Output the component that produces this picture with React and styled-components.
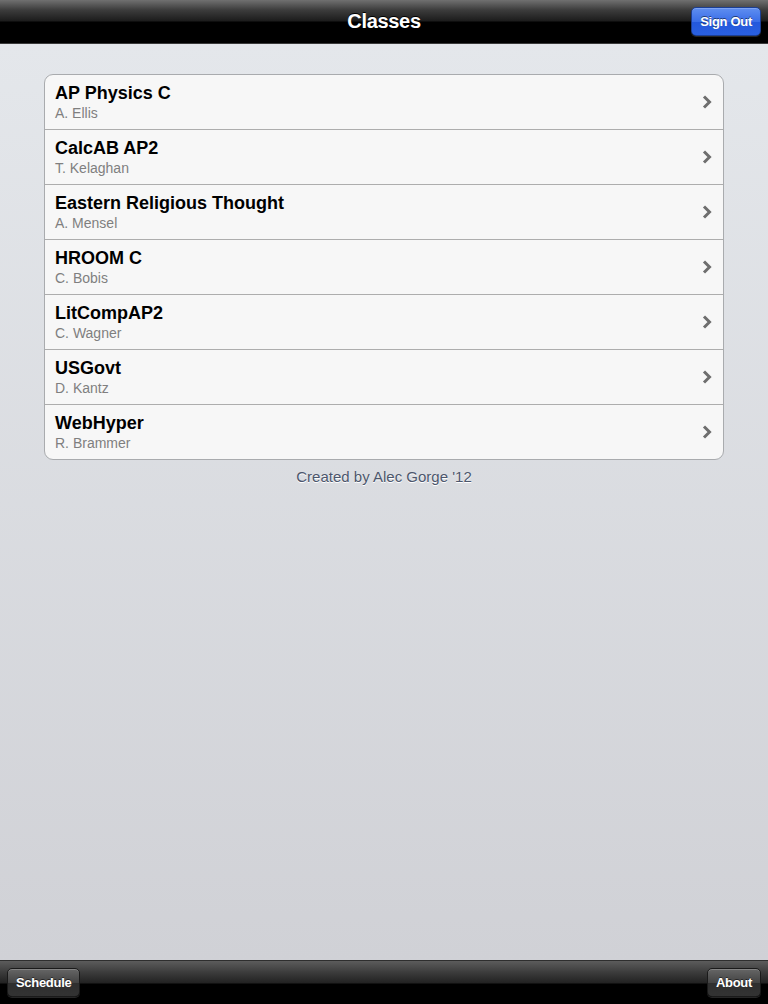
import React from 'react'
import styled, { createGlobalStyle } from 'styled-components'

const classes = [
  { name: 'AP Physics C', teacher: 'A. Ellis' },
  { name: 'CalcAB AP2', teacher: 'T. Kelaghan' },
  { name: 'Eastern Religious Thought', teacher: 'A. Mensel' },
  { name: 'HROOM C', teacher: 'C. Bobis' },
  { name: 'LitCompAP2', teacher: 'C. Wagner' },
  { name: 'USGovt', teacher: 'D. Kantz' },
  { name: 'WebHyper', teacher: 'R. Brammer' },
]

export default function App () {
  return (
    <StyledScreen>
      <GlobalStyle />
      <StyledNavBar>
        <h1>Classes</h1>
        <StyledBarButton $blue>Sign Out</StyledBarButton>
      </StyledNavBar>
      <StyledContent>
        <StyledTable>
          {classes.map((c) => (
            <StyledRow key={c.name}>
              <div className="text">
                <h2>{c.name}</h2>
                <p>{c.teacher}</p>
              </div>
              <svg width="10" height="14" viewBox="0 0 10 14">
                <path d="M2 1.5 L7.5 7 L2 12.5" fill="none" stroke="#6e6e6e" strokeWidth="3" />
              </svg>
            </StyledRow>
          ))}
        </StyledTable>
        <StyledFooter>Created by Alec Gorge '12</StyledFooter>
      </StyledContent>
      <StyledToolbar>
        <StyledBarButton>Schedule</StyledBarButton>
        <StyledBarButton>About</StyledBarButton>
      </StyledToolbar>
    </StyledScreen>
  )
}

const GlobalStyle = createGlobalStyle`
  html, body {
    margin: 0;
    padding: 0;
  }
  body {
    font-family: "Liberation Sans", Arial, sans-serif;
  }
`

const StyledScreen = styled.div`
  width: 768px;
  height: 1004px;
  display: flex;
  flex-direction: column;
  overflow: hidden;
`

const StyledNavBar = styled.div`
  height: 43px;
  flex-shrink: 0;
  display: flex;
  align-items: center;
  justify-content: flex-end;
  padding: 0 7px;
  position: relative;
  background: linear-gradient(#707070 0px, #3c3c3c 10px, #1c1c1c 21px, #000 22px, #000 100%);
  border-bottom: 1px solid #3a3a3a;
  h1 {
    position: absolute;
    left: 0;
    right: 0;
    margin: 0;
    text-align: center;
    color: #fff;
    font-size: 20px;
    font-weight: bold;
    letter-spacing: -0.3px;
    text-shadow: 0 -1px 0 #000;
    pointer-events: none;
  }
`

const StyledBarButton = styled.div`
  position: relative;
  height: 27px;
  padding: 0 8px;
  display: flex;
  align-items: center;
  border-radius: 5px;
  color: #fff;
  font-size: 13px;
  font-weight: bold;
  letter-spacing: -0.3px;
  text-shadow: 0 -1px 0 rgba(0, 0, 0, 0.5);
  border: 1px solid ${(p) => (p.$blue ? '#1c3f94' : '#1a1a1a')};
  background: ${(p) =>
    p.$blue
      ? 'linear-gradient(#5f8ef0 0%, #3a6ee8 50%, #2358dc 51%, #2a60e0 100%)'
      : 'linear-gradient(#666 0%, #444 50%, #2e2e2e 51%, #333 100%)'};
  box-shadow: 0 1px 0 rgba(255, 255, 255, 0.15), inset 0 1px 0 rgba(255, 255, 255, 0.2);
`

const StyledContent = styled.div`
  flex: 1;
  background: linear-gradient(#e4e7eb, #d0d1d6);
  padding: 30px 44px 0 44px;
  display: flex;
  flex-direction: column;
`

const StyledTable = styled.div`
  background: #f7f7f7;
  border: 1px solid #a9abae;
  border-radius: 9px;
  overflow: hidden;
`

const StyledRow = styled.div`
  height: 54px;
  display: flex;
  align-items: center;
  justify-content: space-between;
  padding: 0 10px 0 10px;
  border-bottom: 1px solid #adadad;
  &:last-child {
    border-bottom: none;
  }
  .text {
    display: flex;
    flex-direction: column;
  }
  h2 {
    margin: 0;
    font-size: 18px;
    font-weight: bold;
    color: #000;
    line-height: 21px;
  }
  p {
    margin: 0;
    font-size: 14px;
    color: #7f7f7f;
    line-height: 18px;
  }
  svg {
    margin-right: 1px;
  }
`

const StyledFooter = styled.div`
  text-align: center;
  color: #4c566c;
  font-size: 15px;
  margin-top: 8px;
  text-shadow: 0 1px 0 #fff;
`

const StyledToolbar = styled.div`
  height: 43px;
  flex-shrink: 0;
  display: flex;
  align-items: center;
  justify-content: space-between;
  padding: 0 7px;
  border-top: 1px solid #2e2e2e;
  background: linear-gradient(#5c5c5c 0px, #3a3a3a 12px, #222 22px, #000 23px, #000 100%);
`
